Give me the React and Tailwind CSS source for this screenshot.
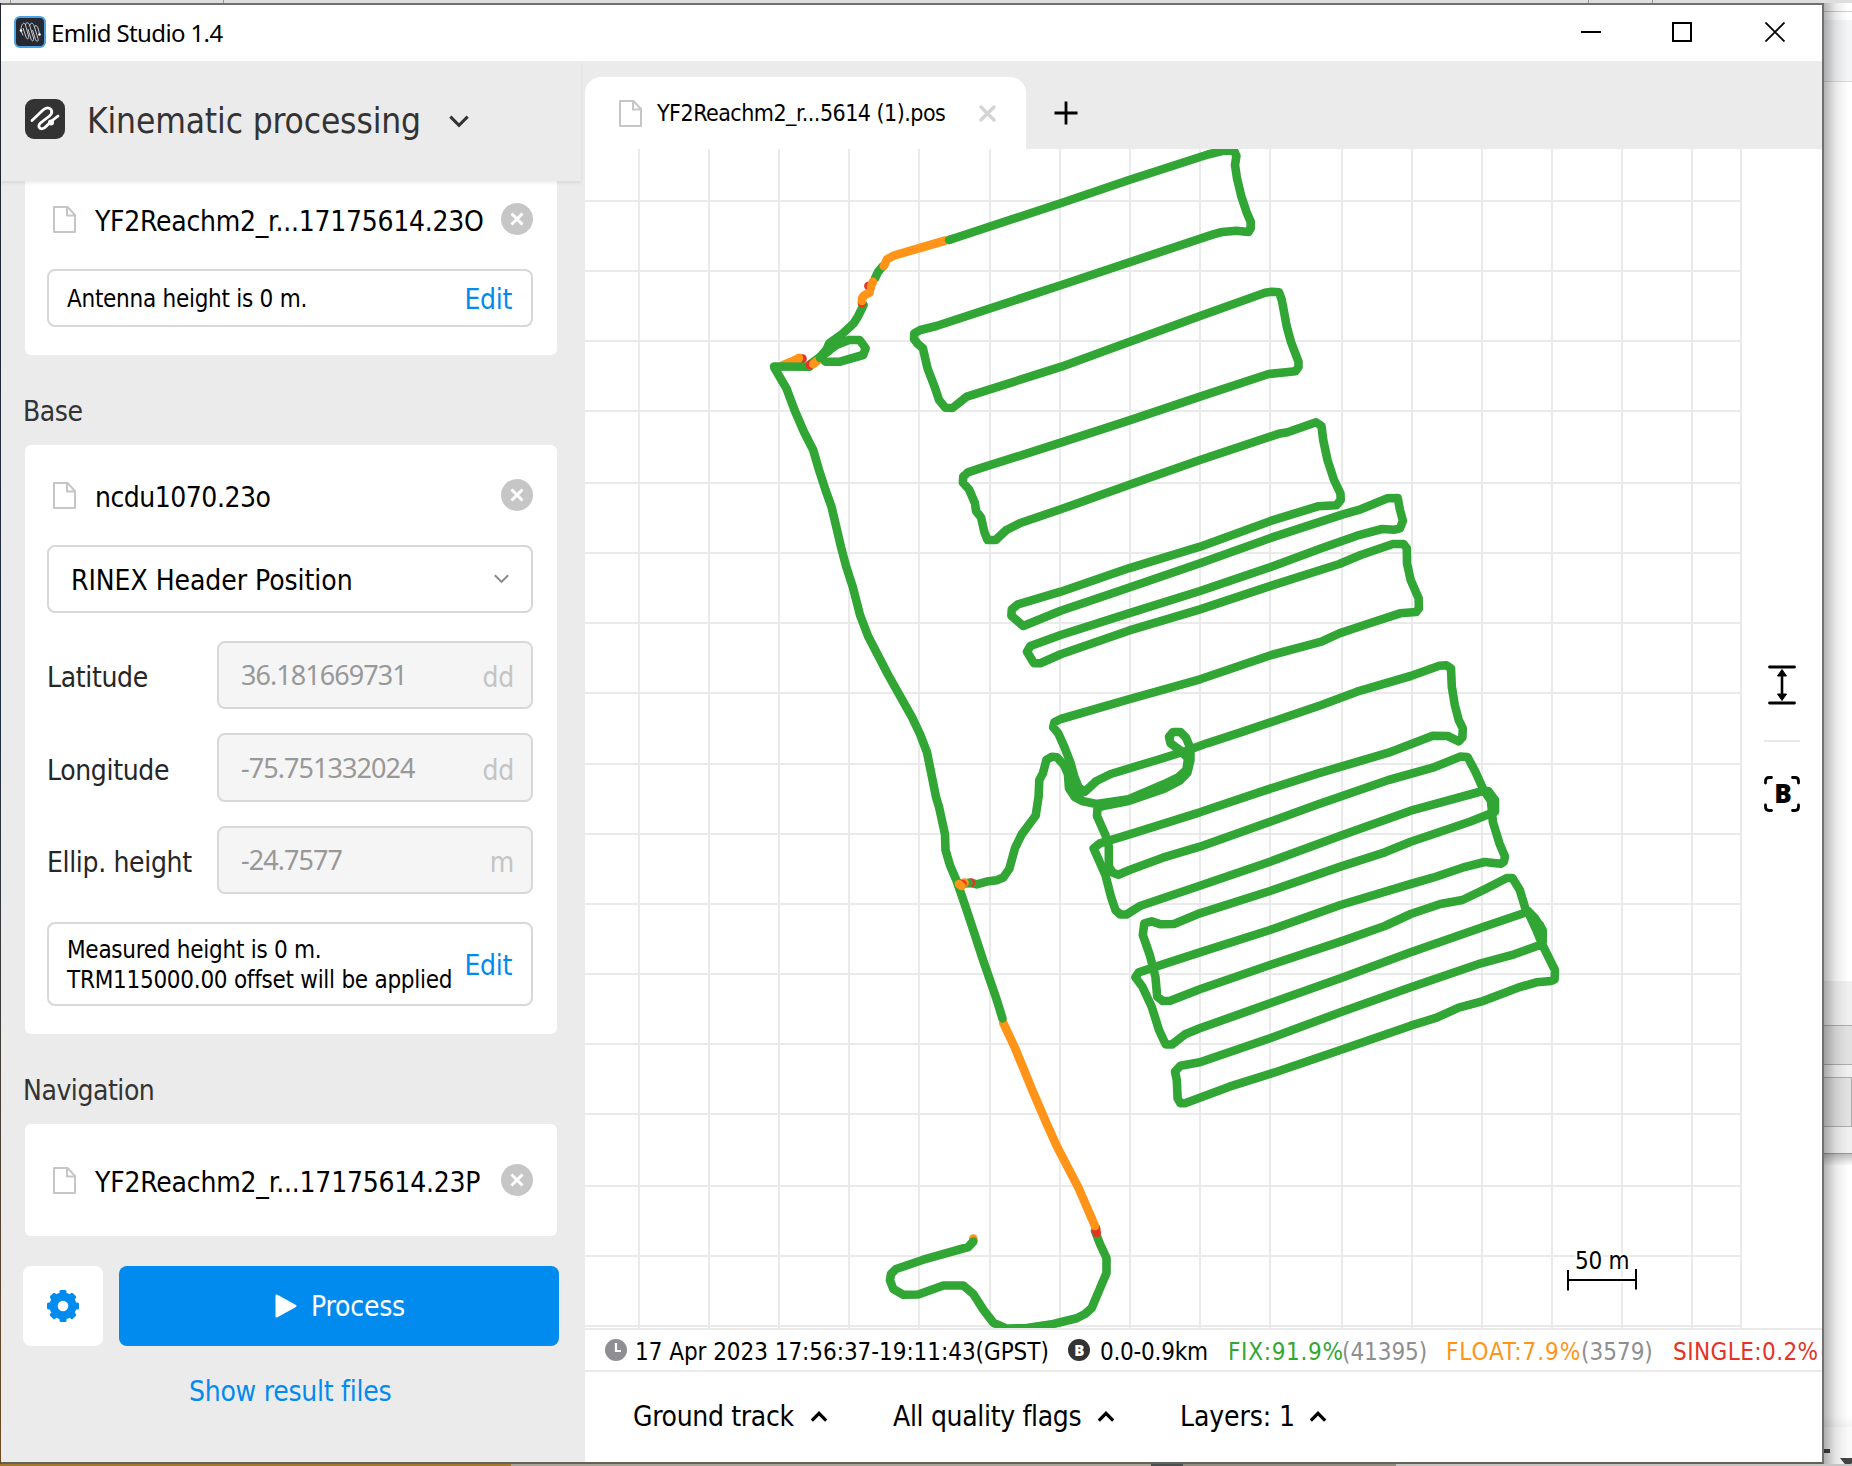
import React from 'react';

const V_LINES = [639, 709, 779, 849, 919, 990, 1060, 1130, 1200, 1270, 1342, 1412, 1482, 1552, 1622, 1692, 1741];
const H_LINES = [201, 271, 341, 411, 483, 553, 623, 693, 764, 834, 904, 974, 1044, 1114, 1186, 1256, 1326];

const GREEN = '#31a635';
const ORANGE = '#ff9419';
const RED = '#e33424';

// Survey track in map pixels, in drawing order.
const TRACKS = [
  [ORANGE, '973.3,1238.5 973.3,1240'],
  [GREEN, '1095,1231 1100,1244 1106.5,1258 1106.5,1273 1098.3,1292.4 1091.7,1308 1085,1314 1076.7,1318.3 1053.3,1324 1026.7,1328 1006.7,1328.6 993.3,1322.7 983.3,1309.6 973.3,1294 963.3,1285.5 943.3,1285.5 918.3,1294.5 903.3,1294.8 893.3,1289 890,1280.4 891,1274 896,1269 923.3,1259.7 968.3,1247 973.3,1241.5'],
  [RED, '1096,1228 1096.7,1233'],
  [ORANGE, '1003.3,1023 1015,1048 1033.3,1092.7 1046.7,1123.7 1056.7,1146 1078.3,1187.4 1095,1226'],
  [ORANGE, '797,359 785,365'],
  [ORANGE, '799,358 796,360 783,365'],
  [RED, '802.5,358.5 802.5,359'],
  [ORANGE, '799,358 795,363'],
  [GREEN, '808,366 820,357 829,351'],
  [GREEN, '774,366.5 809.6,366.7'],
  [GREEN, '774.5,368 786.4,388.3 794.5,410 804,432 813.2,450 819,470 825.5,490 831.500,506.7 836.6,528.3 841,547 846,566 852.8,587 860,615 868,636 888.2,675 911.8,716.9 920,734 927,752.4 936,797 939,806.9 945,834.4 945.5,850 950,865.4 956.7,881 965.5,906.7 974.7,934.3 982.5,958.4 996.7,999.7 1002.5,1018.5'],
  [GREEN, '949,240 1061.4,203 1129,180 1207.9,154.5 1222,151 1234,150.5 1236.4,156 1235,165 1237,178.3 1241.4,196.7 1246.4,211.7 1250.7,221.7 1250.7,228.3 1248.6,232 1236.4,230.7 1222,232 1213.2,234.3 1061.4,285 936.4,326 920.4,330 914.3,333.3 914,339 917.9,344 922.9,348.3 927.5,368.3 934.6,386.7 939,400 945.4,407.7 952.5,408 966.8,396.7 1061.4,366.7 1200.7,315.7 1265,292.7 1272,291.7 1279,292.2 1281.8,300 1286.8,326.7 1291,342 1298.5,361.7 1298.5,367 1295.5,371.3 1268.6,374 1200,396.7 1128.6,420.7 1060.7,442.7 982,467.7 967.9,472.3 963.2,476.7 962.9,482.7 969,489.3 975,503.3 976,511 981,517.3 984.3,531.7 987.5,540 995.7,540 1006.4,530 1019.6,523.3 1060.7,509.3 1128.6,485 1200,460 1278.6,433.8 1287.5,432.3 1316,422.3 1321.5,426 1323.2,440 1327.5,460 1334,480 1340.4,493.3 1340.7,500 1336.4,505.3 1317.9,506.3 1271.4,520.7 1200,546.7 1128.6,568.3 1060.7,591.7 1017.9,604.3 1011.8,609.3 1011.4,615.7 1023.2,626 1060.7,610.7 1128.6,587.7 1200,563.3 1271.4,537.7 1342.9,514.3 1360.7,509.3 1387.5,498.3 1397.7,498 1400,510 1402.9,520.7 1400,528.3 1394.6,529.7 1382,529 1357,535.7 1321.4,548.3 1271.4,566.7 1200,591 1128.6,613.3 1060.7,635 1030.4,646 1027,651.7 1034,663.3 1040.4,663.3 1060.7,654.3 1128.6,630.7 1200,609.3 1271.4,585.7 1339.3,564 1360.7,555 1392.9,544 1403.6,544 1406.8,548.3 1407,563.3 1410.7,580 1418.6,598.3 1418.9,608.3 1416,612 1400,613.3 1364.3,625 1339.3,633.3 1321.4,641.7 1271.4,655 1200,679.3 1128.6,699.3 1060.7,719 1054.3,722.3 1053.2,727.3 1058.2,733.3 1064.3,746.7 1070.7,763.3 1074.3,776.7 1078.6,787.3 1085,791.7 1096.4,781 1110.7,774 1157,760 1185.7,751 1207,743.3 1242.9,731.7 1321.4,705 1357,691.7 1410.7,676 1439.3,665.7 1446.4,665.3 1451,668.3 1451.8,686.7 1454.8,705 1458.7,720 1462.8,728.3 1462.4,737.3 1458.7,741.3 1447.6,736 1432.8,735.7 1388.5,752.7 1318.2,773.3 1259,792.3 1199.8,812.3 1129.5,834.3 1099.9,843.3 1093.6,848.3 1098,858.3 1105.4,875 1111,896.7 1115.4,910 1120.2,914.5 1126.5,914.5 1140.6,905.7 1199.8,885.7 1270,861.7 1340.4,835.7 1410.7,810.7 1480.9,791.5 1488.3,791 1495,800 1495,811.7 1469.8,821.7 1410.7,841.7 1384.8,852.3 1340.4,866.7 1270,891 1199.8,913.3 1173.9,924 1160.9,924.3 1151.7,921.3 1144.3,923.3 1142.8,935 1149.8,955 1155.4,976.7 1157.2,996.7 1162.8,1001 1170.2,1000.7 1199.8,989.3 1270,965 1340.4,941.7 1384.8,926 1410.7,914 1440.3,904 1462.4,900 1484.6,889.3 1506.8,878 1512.4,878 1519.8,890 1525.3,908.3 1534.6,917.7 1542.7,930 1542.7,942 1540,945 1514.2,954.3 1480.9,963.3 1410.7,987.3 1340.4,1012.3 1270,1038.3 1199.8,1062.3 1180.5,1065.7 1175,1071.7 1176.8,1080 1177.6,1098.3 1180.5,1103.3 1185,1103.3 1229.4,1086.7 1273.8,1072.7 1340.4,1050 1410.7,1025.7 1436.6,1017.7 1458.7,1007.7 1481,1001.7 1517.9,987.7 1536.4,982.3 1551.2,981 1554.6,979.3 1554.9,970 1542,944 1536.4,930 1528,912'],
  [GREEN, '959,884 971.7,883 976.7,884.4 986.7,881.6 996.7,880.2 1003.3,877.5 1009.3,868.9 1015,848.2 1021.7,834.4 1035.7,815.5 1038.6,796.7 1039.3,780 1042.9,773.3 1046.4,760 1051.8,756.7 1057,757.3 1064,765 1067.9,774 1069,788.3 1075,797.3 1082,801 1096.4,804 1128.6,799.3 1164.3,784 1178.6,777 1186.4,770 1188,758.3 1181,751 1170.5,743.3 1169,736.7 1173,732 1180.4,732 1186,737.7 1190.4,748.3 1190.5,760 1187.4,772.7 1179.6,780.7 1164.3,788.7 1128.6,801 1103,806 1097.5,808 1097,816 1105.4,835 1108.8,846.7 1108.8,866.7 1112.8,872.7 1118.4,874.7 1129.5,870 1162.8,857.7 1199.8,846.7 1270,821.7 1318.2,804.3 1388.5,780 1432.8,767.7 1449.5,761 1460.6,756.5 1467.5,757 1475.4,771.7 1482.8,788.3 1491,801 1492.8,821.7 1499.4,843.3 1505,856.7 1503.9,861.7 1500.6,863.7 1484.6,862 1462.4,867.7 1432.8,877.7 1410.7,884 1340.4,905 1270,930 1199.8,952.3 1159,965.7 1138.7,972.3 1135.4,977.3 1142.4,986.7 1151.7,1006.7 1159,1030 1165.7,1044.5 1172,1044.5 1185,1034.3 1199.8,1028.3 1270,1003.3 1340.4,978.3 1410.7,952.3 1480.9,927.7 1523.5,913.3'],
  [GREEN, '1068,768 1073,785 1080,798'],
  [GREEN, '1540,925 1542,945'],
  [GREEN, '863.6,305 857.9,316.7 853.6,323.3 841.8,334.3 829.3,343.3 825,353.3 836.4,345 849,340 859.6,340 865.7,348.3 863.2,355 840,361.7 825.7,361.7 820,357 827,349 840,339'],
  [RED, '810,364.5 810,365'],
  [ORANGE, '813.2,364.3 817,361'],
  [GREEN, '820,358 821,357'],
  [RED, '862,303 862,302'],
  [GREEN, '883,266 878,272 875,278.3'],
  [RED, '868.4,286 870.7,287.6'],
  [ORANGE, '872.9,281.7 871,286.5'],
  [ORANGE, '869.6,292.7 864,295.5 862,298.5 862,301'],
  [ORANGE, '945.5,240.5 893.6,255.7 887,259.3 883.9,266'],
  [GREEN, '949,240 952,239'],
  [RED, '971,882.5 971,883'],
  [GREEN, '968.5,882.7 968.5,883'],
  [ORANGE, '964.5,882.6 964.5,883'],
  [RED, '962,884 962.5,884'],
  [ORANGE, '959,884 961.5,886'],
];

function GroundTrack() {
  return (
    <svg className="block h-[1179px] w-[1157px] shrink-0" viewBox="585 149 1157 1179">
      <g stroke="#eaeaea" strokeWidth="2" shapeRendering="crispEdges">
        {V_LINES.map((x) => <line key={x} x1={x} x2={x} y1="149" y2="1328" />)}
        {H_LINES.map((y) => <line key={y} x1="585" x2="1742" y1={y} y2={y} />)}
      </g>
      <g fill="none" strokeWidth="8.6" strokeLinecap="round" strokeLinejoin="round">
        {TRACKS.map(([color, points], i) => <polyline key={i} stroke={color} points={points} />)}
      </g>
      <g stroke="#fff" strokeWidth="5"><path d="M1622 1277v6" /></g>
      <path d="M1568 1270v20.5M1636 1269v20.5M1568 1280h68" stroke="#000" strokeWidth="2" fill="none" />
      <text x="1575" y="1269" fontSize="24" className="font-['DejaVu_Sans_Condensed','DejaVu_Sans',sans-serif] tracking-[-0.3px]" stroke="#fff" strokeWidth="4" paintOrder="stroke">50 m</text>
    </svg>
  );
}

function DocIcon() {
  return (
    <svg className="h-[27px] w-[23px] shrink-0" viewBox="0 0 23 27" fill="none" stroke="#c6c6c6" strokeWidth="2" strokeLinejoin="round">
      <path d="M1 1h13.5L22 9v17H1zM14 1v8.5h8" />
    </svg>
  );
}

function Chevron({ up, className, thick }) {
  return (
    <svg className={className} viewBox="0 0 20 12" fill="none" stroke="currentColor" strokeWidth={thick}>
      <path d={up ? 'M2 10.5 10 2.5 18 10.5' : 'M2 1.5 10 9.5 18 1.5'} />
    </svg>
  );
}

function FileRow({ name, tracking = 'tracking-[-0.27px]' }) {
  return (
    <div className="flex h-8 items-center pl-7 pr-6">
      <DocIcon />
      <span className={`ml-[19px] whitespace-nowrap pt-1.5 text-[28px] leading-8 text-black ${tracking}`}>{name}</span>
      <svg className="ml-auto h-8 w-8 shrink-0" viewBox="0 0 32 32">
        <circle cx="16" cy="16" r="16" fill="#c6c6c6" />
        <path d="m10.5 10.5 11 11m0-11-11 11" stroke="#fff" strokeWidth="3" />
      </svg>
    </div>
  );
}

function HeightBox({ children, className }) {
  return (
    <div className={`mx-[22px] mr-6 flex items-center justify-between rounded-lg border-2 border-[#d8d8d8] pl-[18px] pr-[19px] ${className}`}>
      <span className="whitespace-nowrap pt-px text-[24px] leading-[30px] tracking-[-0.27px] text-black">{children}</span>
      <a className="pt-1 text-[28px] leading-8 tracking-[-0.3px] text-[#028bee]">Edit</a>
    </div>
  );
}

function Field({ label, value, unit, className }) {
  return (
    <div className={`ml-[22px] mr-6 flex items-center ${className}`}>
      <span className="w-[170px] shrink-0 whitespace-nowrap pt-1.5 text-[28px] leading-8 tracking-[-0.35px] text-[#262626]">{label}</span>
      <div className="flex h-full flex-1 items-center justify-between rounded-lg border-2 border-[#d8d8d8] bg-[#f5f5f5] pl-[22px] pr-[17px]">
        <span className="font-['Noto_Sans',sans-serif] text-[27px] leading-8 tracking-[-0.95px] text-[#989898]">{value}</span>
        <span className="pt-1.5 text-[28px] leading-8 tracking-[-0.3px] text-[#c4c4c4]">{unit}</span>
      </div>
    </div>
  );
}

function SectionLabel({ children }) {
  return <h2 className="mb-[19px] ml-[22px] mt-[43px] text-[28px] leading-7 tracking-[-0.45px] text-[#333]">{children}</h2>;
}

function Card({ children, className }) {
  return <section className={`ml-6 w-[532px] bg-white ${className}`}>{children}</section>;
}

function Sidebar() {
  return (
    <aside className="flex w-[584px] shrink-0 flex-col bg-[#ebebeb]">
      <div className="z-10 flex h-[120px] w-[580px] shrink-0 items-center pl-6 text-[#333] shadow-[0_2px_3px_rgba(0,0,0,0.08)]">
        <svg className="mb-1 h-10 w-10" viewBox="0 0 40 40" fill="none">
          <rect width="40" height="40" rx="9" fill="#333" />
          <path d="M7 21.500 18 11Q22.500 7 26 10.500 28 14 24.500 17L15.500 24Q12.500 27 15 29.300 18 31 21.500 27L26 22.500 33 17" stroke="#fff" strokeWidth="2.800" strokeLinecap="round" />
          <circle cx="26" cy="23.500" r="3" fill="#fff" />
        </svg>
        <span className="ml-[22px] whitespace-nowrap text-[35px] leading-[40px] tracking-[-0.14px]">Kinematic processing</span>
        <Chevron className="ml-[27px] h-[13px] w-[22px]" thick={2.8} />
      </div>
      <Card className="h-[174px] rounded-b-md pt-[22px]">
        <FileRow name="YF2Reachm2_r...17175614.23O" />
        <HeightBox className="mt-[34px] h-[58px]">Antenna height is 0 m.</HeightBox>
      </Card>
      <SectionLabel>Base</SectionLabel>
      <Card className="h-[589px] rounded-md pt-[34px]">
        <FileRow name="ncdu1070.23o" tracking="tracking-[-0.5px]" />
        <div className="ml-[22px] mr-6 mt-[34px] flex h-[68px] items-center justify-between rounded-lg border-2 border-[#d8d8d8] pl-[22px] pr-[21px]">
          <span className="pt-1 text-[28px] leading-8 tracking-[-0.05px] text-black">RINEX Header Position</span>
          <Chevron className="h-[10px] w-[17px] text-[#8a8a8a]" thick={2.4} />
        </div>
        <Field label="Latitude" value="36.181669731" unit="dd" className="mt-7 h-[68px]" />
        <Field label="Longitude" value="-75.751332024" unit="dd" className="mt-6 h-[69px]" />
        <Field label="Ellip. height" value="-24.7577" unit="m" className="mt-6 h-[68px]" />
        <HeightBox className="mt-7 h-[84px]">Measured height is 0 m.<br />TRM115000.00 offset will be applied</HeightBox>
      </Card>
      <SectionLabel>Navigation</SectionLabel>
      <Card className="h-[112px] rounded-md pt-10">
        <FileRow name="YF2Reachm2_r...17175614.23P" tracking="tracking-[-0.22px]" />
      </Card>
      <div className="ml-[22px] mt-[30px] flex h-20 gap-4">
        <button className="flex w-20 items-center justify-center rounded-lg bg-white">
          <svg className="h-8 w-8" viewBox="-16 -16 32 32" fill="#028bee">
            <circle r="13.500" />
            {[0, 45, 90, 135].map((a) => <rect key={a} x="-3.500" y="-16" width="7" height="32" rx="1.500" transform={`rotate(${a})`} />)}
            <circle r="5.300" fill="#fff" />
          </svg>
        </button>
        <button className="flex w-[440px] items-center rounded-lg bg-[#028bee] pl-[156px] text-white">
          <svg className="h-6 w-[22px]" viewBox="0 0 22 24" fill="#fff" stroke="#fff" strokeWidth="2" strokeLinejoin="round">
            <path d="M1.500 1.500 20.500 12 1.500 22.500z" />
          </svg>
          <span className="ml-[14px] pt-0.5 text-[28px] leading-8 tracking-[-0.2px]">Process</span>
        </button>
      </div>
      <a className="ml-[188px] mt-8 text-[28px] leading-7 tracking-[-0.26px] text-[#028bee]">Show result files</a>
    </aside>
  );
}

function MapTools() {
  return (
    <div className="flex w-20 flex-col items-center pt-[516px]">
      <svg className="h-10 w-7" viewBox="0 0 28 40" stroke="#000" fill="#000">
        <path d="M1.500 2h25M1.500 38h25" strokeWidth="2.800" strokeLinecap="round" />
        <path d="M14 8v24" strokeWidth="2.600" />
        <path d="M14 4.500 18.500 11h-9zM14 35.500 18.500 29h-9z" strokeWidth="1" strokeLinejoin="round" />
      </svg>
      <div className="mt-[35px] h-0.5 w-9 bg-[#e8e8e8]" />
      <svg className="mt-[34px] h-9 w-9" viewBox="0 0 36 36" fill="none">
        <path d="M1.500 7V5q0-3.500 3.500-3.500h2.500M28.500 1.500H31q3.500 0 3.500 3.500v2M34.500 29v2q0 3.500-3.500 3.500h-2.500M7.500 34.500H5q-3.500 0-3.500-3.500v-2" stroke="#000" strokeWidth="2.800" strokeLinecap="round" />
        <text x="19" y="26.500" textAnchor="middle" fontSize="26" fontWeight="800" fill="#000" className="font-['Open_Sans','Noto_Sans',sans-serif]">B</text>
      </svg>
    </div>
  );
}

function StatusBar() {
  return (
    <div className="flex h-11 shrink-0 items-center overflow-hidden whitespace-nowrap border-y-2 border-[#eaeaea] pl-5 text-[24px] leading-8 text-black">
      <svg className="h-[22px] w-[22px] shrink-0" viewBox="0 0 22 22">
        <circle cx="11" cy="11" r="11" fill="#8e8e93" />
        <path d="M11 4v8h5" stroke="#fff" strokeWidth="2.200" fill="none" />
      </svg>
      <span className="w-[441px] shrink-0 pl-2 pt-[3px] tracking-[-0.05px]">17 Apr 2023 17:56:37-19:11:43(GPST)</span>
      <svg className="h-[22px] w-[22px] shrink-0" viewBox="0 0 22 22">
        <circle cx="11" cy="11" r="11" fill="#333" />
        <text x="11.200" y="16.500" textAnchor="middle" fontSize="15" fontWeight="800" fill="#fff" className="font-['Open_Sans','Noto_Sans',sans-serif]">B</text>
      </svg>
      <span className="w-[138px] shrink-0 pl-2.5 pt-[3px] tracking-[-0.25px]">0.0-0.9km</span>
      <span className="w-[114px] shrink-0 pt-[3px] tracking-[0.7px] text-[#31a635]">FIX:91.9%</span>
      <span className="w-[104px] shrink-0 pt-[3px] tracking-[-0.05px] text-[#8e8e93]">(41395)</span>
      <span className="w-[135px] shrink-0 pt-[3px] tracking-[0.95px] text-[#ff9419]">FLOAT:7.9%</span>
      <span className="w-[92px] shrink-0 pt-[3px] text-[#8e8e93]">(3579)</span>
      <span className="w-[147px] shrink-0 pt-[3px] tracking-[0.44px] text-[#e33424]">SINGLE:0.2%</span>
      <span className="shrink-0 pt-[3px] text-[#8e8e93]">(</span>
    </div>
  );
}

function Menu({ label, className }) {
  return (
    <button className={`flex items-center whitespace-nowrap text-[28px] leading-8 text-black ${className}`}>
      {label}
      <Chevron up className="mb-0.5 h-[11px] w-[18px]" thick={3.6} />
    </button>
  );
}

function Workspace() {
  return (
    <main className="flex w-[1237px] flex-col bg-white">
      <div className="flex h-[88px] shrink-0 items-end bg-[#ebebeb]">
        <div className="flex h-[72px] w-[441px] items-center rounded-t-2xl bg-white pl-[34px]">
          <DocIcon />
          <span className="ml-[15px] w-[322px] whitespace-nowrap text-[23px] leading-8 tracking-[-0.52px] text-black">YF2Reachm2_r...5614 (1).pos</span>
          <svg className="h-[17px] w-[17px]" viewBox="0 0 17 17" stroke="#d4d4d4" strokeWidth="3.400" strokeLinecap="round">
            <path d="m2 2 13 13M15 2 2 15" />
          </svg>
        </div>
        <svg className="mb-6 ml-7 h-6 w-6" viewBox="0 0 24 24" stroke="#000" strokeWidth="2.800">
          <path d="M12 .5v23M.5 12h23" />
        </svg>
      </div>
      <div className="flex h-[1179px] shrink-0">
        <GroundTrack />
        <MapTools />
      </div>
      <StatusBar />
      <div className="flex flex-1 items-center pl-12">
        <Menu label="Ground track" className="w-[260px] gap-[16px] tracking-[-0.33px]" />
        <Menu label="All quality flags" className="w-[287px] gap-[16px] tracking-[-0.33px]" />
        <Menu label="Layers: 1" className="gap-[14px] tracking-[-0.1px]" />
      </div>
    </main>
  );
}

function TitleBar() {
  return (
    <header className="flex h-14 shrink-0 items-center bg-white pl-[13px] pr-[37px] text-black">
      <svg className="mb-0.5 h-8 w-8" viewBox="0 0 32 32" fill="none">
        <rect x="1" y="1" width="30" height="30" rx="5" fill="#262931" stroke="#4ba3e3" strokeWidth="2" />
        <path d="M7 14.500C7 8 10 5 11.500 9l3 11c.8 3-1.500 4-2.500 1L9 12M11.500 9c0-3 3-3 4 0l4 13c.8 3-1.500 4-2.500 1l-3-10M16 9.500c0-3 3-3 4 0l4 13c.8 3-1.500 4-2.500 1l-3-9.500M20.500 11c.5-2 2.500-2 3.500 1l1.500 6M7 14.500l2 5" stroke="#d5d7da" strokeWidth="0.900" />
        <circle cx="7" cy="14.500" r="1.300" fill="#fff" />
        <circle cx="25.500" cy="18.500" r="1.300" fill="#fff" />
      </svg>
      <h1 className="ml-[5px] whitespace-nowrap font-['Noto_Sans',sans-serif] text-[24px] leading-8 tracking-[-0.62px]">Emlid Studio 1.4</h1>
      <div className="mb-0.5 ml-auto flex items-center">
        <div className="h-0.5 w-5 bg-black" />
        <div className="ml-[71px] h-5 w-5 border-2 border-black" />
        <svg className="ml-[73px] h-5 w-5" viewBox="0 0 20 20" stroke="#000" strokeWidth="1.800"><path d="m.5.5 19 19M19.500.5l-19 19" /></svg>
      </div>
    </header>
  );
}

function Backdrop() {
  return (
    <div className="relative flex w-7 shrink-0 flex-col overflow-hidden bg-white">
      <div className="h-[9px] shrink-0 border-b border-[#cfcfcf] bg-white" />
      <div className="h-2 shrink-0 bg-white" />
      <div className="h-[62px] shrink-0 border-b border-[#dadada] bg-[#f4f5f7]" />
      <div className="h-[899px] shrink-0" />
      <div className="flex h-[173px] shrink-0 flex-col border-b border-[#9a9a9a] bg-[#f0f0f0] pt-11">
        <div className="h-10 border-y border-[#adadad] bg-[#e1e1e1]" />
        <div className="mt-3 h-[50px] border border-l-0 border-[#adadad] bg-[#e1e1e1]" />
      </div>
      <div className="h-3 shrink-0 bg-gradient-to-b from-black/25 to-transparent" />
      <div className="h-[249px] shrink-0" />
      <div className="h-3 shrink-0 bg-gradient-to-b from-transparent to-black/5" />
      <div className="flex-1 bg-[#fafafa] pt-[22px]">
        <div className="flex justify-between">
          <div className="h-1 w-1.5 bg-[#444]" />
          <svg className="mt-2 h-2.5 w-3" viewBox="0 0 12 10"><path d="M0 1h16L8 11z" fill="#444" /></svg>
        </div>
      </div>
      <div className="absolute inset-y-0 left-0 w-6 bg-gradient-to-r from-black/30 via-black/8 to-transparent" />
    </div>
  );
}

export default function App() {
  return (
    <div className="flex h-[1466px] w-[1852px] flex-col overflow-hidden bg-white font-['DejaVu_Sans_Condensed','DejaVu_Sans',sans-serif]">
      <div className="flex h-[3px] shrink-0 bg-[#dedede]">
        <div className="ml-2.5 w-[214px] border-x border-[#999]" />
        <div className="ml-auto mr-[199px] w-[65px] border-x border-[#999]" />
      </div>
      <div className="flex h-[1461px] shrink-0">
        <div className="w-px shrink-0 bg-gradient-to-b from-[#20242f] via-[#203040] to-[#6b4a20]" />
        <div className="flex w-[1823px] shrink-0 flex-col border-b-2 border-r-2 border-t-2 border-b-[#66605a] border-r-[#707070] border-t-[#707070]">
          <TitleBar />
          <div className="flex flex-1">
            <Sidebar />
            <Workspace />
          </div>
        </div>
        <Backdrop />
      </div>
      <div className="flex h-0.5 shrink-0 bg-[#c4c4c4]">
        <div className="w-[511px] bg-[#a5772c]" />
        <div className="w-[640px] bg-[#aaa596]" />
        <div className="w-8 bg-[#4a4f52]" />
        <div className="w-[213px] bg-[#918d80]" />
      </div>
    </div>
  );
}
